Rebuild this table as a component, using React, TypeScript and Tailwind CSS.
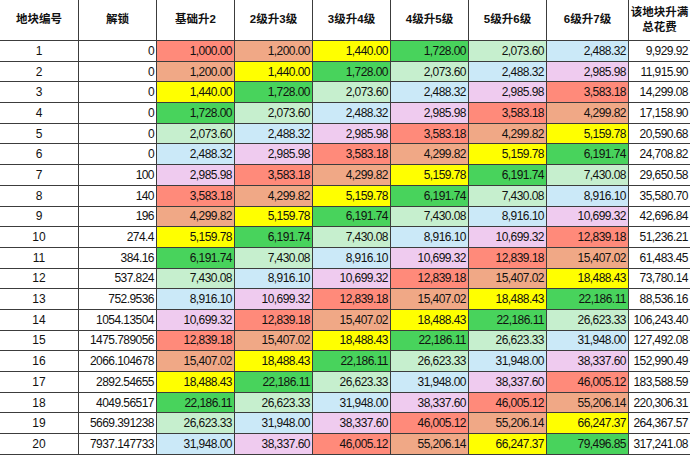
const COLORS = ['bg-[#ff8a7a]', 'bg-[#f0a886]', 'bg-[#ffff00]', 'bg-[#48d35c]', 'bg-[#c6efce]', 'bg-[#cbe9f8]', 'bg-[#efcbef]'];

const HEADERS = ['地块编号', '解锁', '基础升2', '2级升3级', '3级升4级', '4级升5级', '5级升6级', '6级升7级'];

const UNLOCK = ['0', '0', '0', '0', '0', '0', '100', '140', '196', '274.4', '384.16', '537.824', '752.9536', '1054.13504', '1475.789056', '2066.104678', '2892.54655', '4049.56517', '5669.391238', '7937.147733'];

const cost = (k: number) => 1000 * Math.pow(1.2, k);
const fmt = (n: number) => n.toLocaleString('en-US', { minimumFractionDigits: 2, maximumFractionDigits: 2 });

const rows = UNLOCK.map((unlock, i) => {
  const levels = [0, 1, 2, 3, 4, 5].map((c) => ({ value: cost(i + c), color: COLORS[(i + c) % 7] }));
  return { id: i + 1, unlock, levels, total: levels.reduce((s, l) => s + l.value, 0) };
});

const num = 'flex items-center justify-end pr-[2px] text-[12px] tracking-[-0.55px]';

export default function App() {
  return (
    <div className="w-[690px] h-[455px] overflow-hidden bg-white text-[#111]" style={{ fontFamily: '"Liberation Sans", "Noto Sans CJK SC", sans-serif' }}>
      <div className="grid grid-cols-[78px_77px_77px_77px_77px_77px_77px_81px_61px] grid-rows-[40px_repeat(20,19.7px)] gap-px bg-[#3c3c3c] pb-px">
        {HEADERS.map((h) => (
          <div key={h} className="flex items-center justify-center bg-white text-[11.5px] font-bold">{h}</div>
        ))}
        <div className="flex flex-col items-center justify-center bg-white text-[11.5px] font-bold leading-[15px]">
          <span>该地块升满</span>
          <span>总花费</span>
        </div>
        {rows.map((r) => (
          <div key={r.id} className="contents">
            <div className="flex items-center justify-center bg-white text-[12px]">{r.id}</div>
            <div className={`${num} bg-white`}>{r.unlock}</div>
            {r.levels.map((l, c) => (
              <div key={c} className={`${num} ${l.color}`}>{fmt(l.value)}</div>
            ))}
            <div className={`${num} bg-white`}>{fmt(r.total)}</div>
          </div>
        ))}
      </div>
    </div>
  );
}
